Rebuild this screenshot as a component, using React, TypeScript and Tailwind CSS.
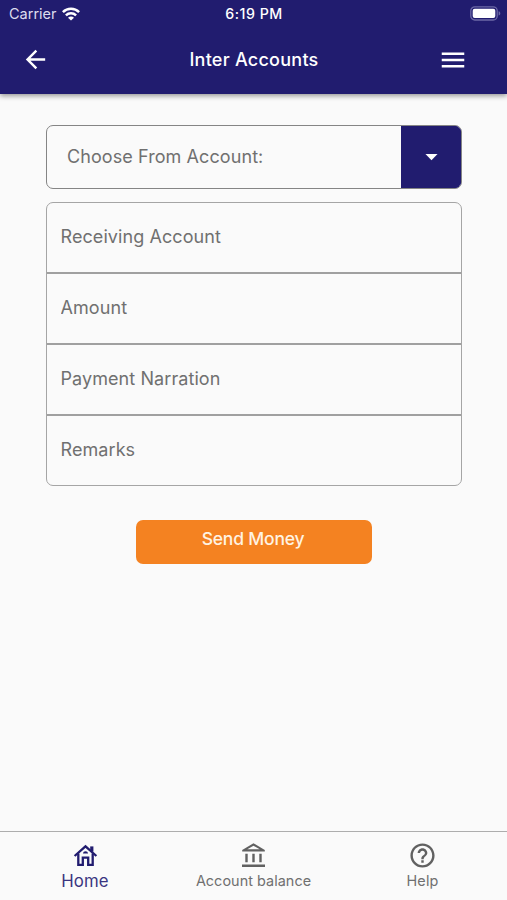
import { MdArrowBack, MdArrowDropDown, MdHelpOutline, MdMenu } from "react-icons/md";

const fields = ["Receiving Account", "Amount", "Payment Narration", "Remarks"];

function WifiIcon() {
  return (
    <svg width="18" height="14" viewBox="0 0 18 14" fill="none" stroke="white" strokeWidth="2.5">
      <path d="M0.9 5.1C5.4 0.7 12.6 0.7 17.1 5.1" />
      <path d="M3.9 8.3C6.8 5.5 11.2 5.5 14.1 8.3" />
      <path d="M9 13.6 6 10.7C7.7 9.1 10.3 9.1 12 10.7Z" fill="white" stroke="none" />
    </svg>
  );
}

function BatteryIcon() {
  return (
    <svg width="31" height="15" viewBox="0 0 31 15" fill="none">
      <rect x="0.8" y="0.8" width="26.4" height="13.2" rx="4" stroke="#6c68a6" strokeWidth="1.3" />
      <rect x="2.7" y="2.7" width="22.6" height="9.4" rx="2" fill="white" />
      <path d="M28.6 5.2v4.4c1.1-.4 1.7-1.2 1.7-2.2s-.6-1.8-1.7-2.2z" fill="#6c68a6" />
    </svg>
  );
}

function HouseIcon() {
  return (
    <svg width="29" height="29" viewBox="0 0 29 29" fill="none" stroke="currentColor" strokeWidth="2.3">
      <path d="M3.6 15 14.5 5.4 25.4 15" />
      <path d="M7.3 12.5v11.3h4.5v-7.1h5.4v7.1h4.5V12.5" />
      <path d="M20.8 5.4v5.2" strokeWidth="3.2" />
      <path d="M12 12.6c.2-1.5 1.2-2.3 2.5-2.3s2.3.8 2.5 2.3z" fill="currentColor" stroke="none" />
    </svg>
  );
}

function BankIcon() {
  return (
    <svg width="29" height="29" viewBox="0 0 29 29" fill="none" stroke="currentColor" strokeWidth="2.4">
      <path d="M3.2 8.9v1.5h22.6V8.9L14.5 2.2zM8.3 8.2l6.2-3.4 6.2 3.4z" fill="currentColor" fillRule="evenodd" stroke="none" />
      <path d="M7.5 12.7v8.5M14.5 12.7v8.5M21.5 12.7v8.5M3 24.8h23" />
    </svg>
  );
}

function StatusBar() {
  return (
    <div className="grid h-[27px] grid-cols-3 items-center pl-[9px] pr-[6px]">
      <div className="flex items-center gap-[5px] text-[14.5px] text-[#dddcee]">
        <span>Carrier</span>
        <WifiIcon />
      </div>
      <span className="pr-[2px] text-center text-[14.2px] font-medium tracking-[0.5px]">6:19 PM</span>
      <div className="flex justify-end">
        <BatteryIcon />
      </div>
    </div>
  );
}

function Header() {
  return (
    <header className="relative h-[94px] bg-[#211c6f] text-white shadow-[0_2px_5px_rgba(0,0,0,0.4)]">
      <StatusBar />
      <div className="flex h-[65px] items-center justify-between pl-[21px] pr-[39px]">
        <button type="button" aria-label="Back" className="w-[48px]">
          <MdArrowBack size={29} />
        </button>
        <h1 className="pl-[19px] text-[18px] font-medium tracking-[0.25px]">Inter Accounts</h1>
        <button type="button" aria-label="Menu" className="flex w-[48px] justify-end">
          <MdMenu size={30} />
        </button>
      </div>
    </header>
  );
}

function BottomNav() {
  return (
    <nav className="grid h-[69px] grid-cols-3 border-t border-[#adadad] text-[#616161]">
      <button type="button" className="flex flex-col items-center pl-px pt-[9px] text-[#211c6f]">
        <HouseIcon />
        <span className="text-[16.8px] leading-[22px] tracking-[0.1px] text-[#3a3580]">Home</span>
      </button>
      <button type="button" className="flex flex-col items-center pt-[9px]">
        <BankIcon />
        <span className="text-[14.4px] leading-[22px] tracking-[0.05px] text-[#707070]">Account balance</span>
      </button>
      <button type="button" className="flex flex-col items-center pt-[9px]">
        <MdHelpOutline size={29} />
        <span className="text-[14.4px] leading-[22px] tracking-[0.2px] text-[#707070]">Help</span>
      </button>
    </nav>
  );
}

export default function App() {
  return (
    <div className="flex h-[900px] w-[507px] flex-col bg-[#fafafa] font-['Inter',sans-serif]">
      <Header />

      <main className="flex-1 pl-[46px] pr-[45px] pt-[31px]">
        {/* source account */}
        <button
          type="button"
          className="flex h-[64px] w-full overflow-hidden rounded-[7px] border border-[#858585] text-left"
        >
          <span className="flex-1 self-center pb-px pl-[20px] text-[18px] tracking-[0.08px] text-[#707070]">
            Choose From Account:
          </span>
          <span className="flex w-[60px] items-center justify-center self-stretch bg-[#211c6f] pb-px text-white shadow-[1px_0_0_#211c6f]">
            <MdArrowDropDown size={29} />
          </span>
        </button>

        <div className="mt-[13px] rounded-[7px] border border-[#a5a5a5]">
          {fields.map((label) => (
            <input
              key={label}
              type="text"
              placeholder={label}
              className="block h-[71px] w-full border-b-2 border-[#a0a0a0] pb-[3px] pl-[13.5px] text-[18px] tracking-[0.08px] outline-none placeholder:text-[#707070] last:h-[69px] last:border-b-0"
            />
          ))}
        </div>

        <button
          type="button"
          className="mx-auto mt-[34px] block h-[44px] w-[236px] rounded-[7px] bg-[#f48221] pb-[6px] pr-[2px] text-[17.5px] font-medium tracking-[-0.2px] text-[#fff3e2]"
        >
          Send Money
        </button>
      </main>

      <BottomNav />
    </div>
  );
}
